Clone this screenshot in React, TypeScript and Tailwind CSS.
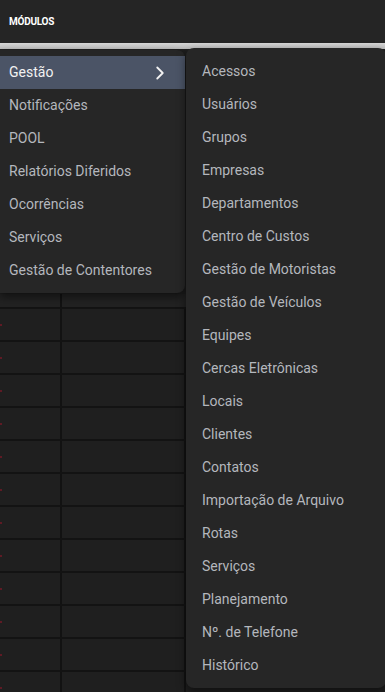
import React from "react";

const mainItems = [
  "Gestão",
  "Notificações",
  "POOL",
  "Relatórios Diferidos",
  "Ocorrências",
  "Serviços",
  "Gestão de Contentores",
];

const subItems = [
  "Acessos",
  "Usuários",
  "Grupos",
  "Empresas",
  "Departamentos",
  "Centro de Custos",
  "Gestão de Motoristas",
  "Gestão de Veículos",
  "Equipes",
  "Cercas Eletrônicas",
  "Locais",
  "Clientes",
  "Contatos",
  "Importação de Arquivo",
  "Rotas",
  "Serviços",
  "Planejamento",
  "Nº. de Telefone",
  "Histórico",
];

export default function App() {
  const rows = Array.from({ length: 12 });
  return (
    <div
      className="relative w-[385px] h-[692px] overflow-hidden bg-[#1f1f1f]"
      style={{ fontFamily: "Roboto, 'Liberation Sans', sans-serif" }}
    >
      <div className="h-[43px] bg-[#252525] flex items-center pl-[9px]">
        <span className="text-[10px] font-bold text-white tracking-tight">MÓDULOS</span>
      </div>
      <div className="h-[6px] bg-gradient-to-b from-[#d6d6d6] to-[#bdbdbd]" />
      <div className="h-[245px] bg-[#1f1f1f]" />
      <div className="h-[13px] bg-[#222222] grid grid-cols-[62px_1fr]">
        <div className="border-r-2 border-[#121212]" />
        <div />
      </div>
      {rows.map((_, i) => (
        <div key={i} className="h-[33px] border-t-2 border-[#131313] grid grid-cols-[62px_1fr] bg-[#1f1f1f]">
          <div className="border-r-2 border-[#121212] flex items-center">
            <span className="w-[2px] h-[2px] bg-[#5e1a24]" />
          </div>
          <div className="grid grid-cols-[124px_1fr]">
            <div className="border-r-2 border-[#121212]" />
            <div />
          </div>
        </div>
      ))}

      <div className="absolute left-0 top-[50px] w-[185px] bg-[#262626] rounded-r-lg py-[6px] shadow-[0_4px_10px_rgba(0,0,0,0.5)]">
        {mainItems.map((it, i) => (
          <div
            key={it}
            className={`h-[33px] flex items-center justify-between pl-[9px] pr-[14px] text-[14px] ${
              i === 0 ? "bg-[#4b5466] text-[#f2f2f2]" : "text-[#b4b7bd]"
            }`}
          >
            <span>{it}</span>
            {i === 0 && (
              <svg width="22" height="22" viewBox="0 0 24 24" fill="none" stroke="#f2f2f2" strokeWidth="2" strokeLinecap="round" strokeLinejoin="round">
                <path d="M9 6l6 6-6 6" />
              </svg>
            )}
          </div>
        ))}
      </div>

      <div className="absolute left-[186px] top-[48px] w-[200px] h-[640px] bg-[#262626] rounded-lg pt-[7px] shadow-[0_4px_10px_rgba(0,0,0,0.5)]">
        {subItems.map((it) => (
          <div key={it} className="h-[33px] flex items-center pl-[16px] text-[14px] text-[#b4b7bd]">
            {it}
          </div>
        ))}
      </div>
    </div>
  );
}
